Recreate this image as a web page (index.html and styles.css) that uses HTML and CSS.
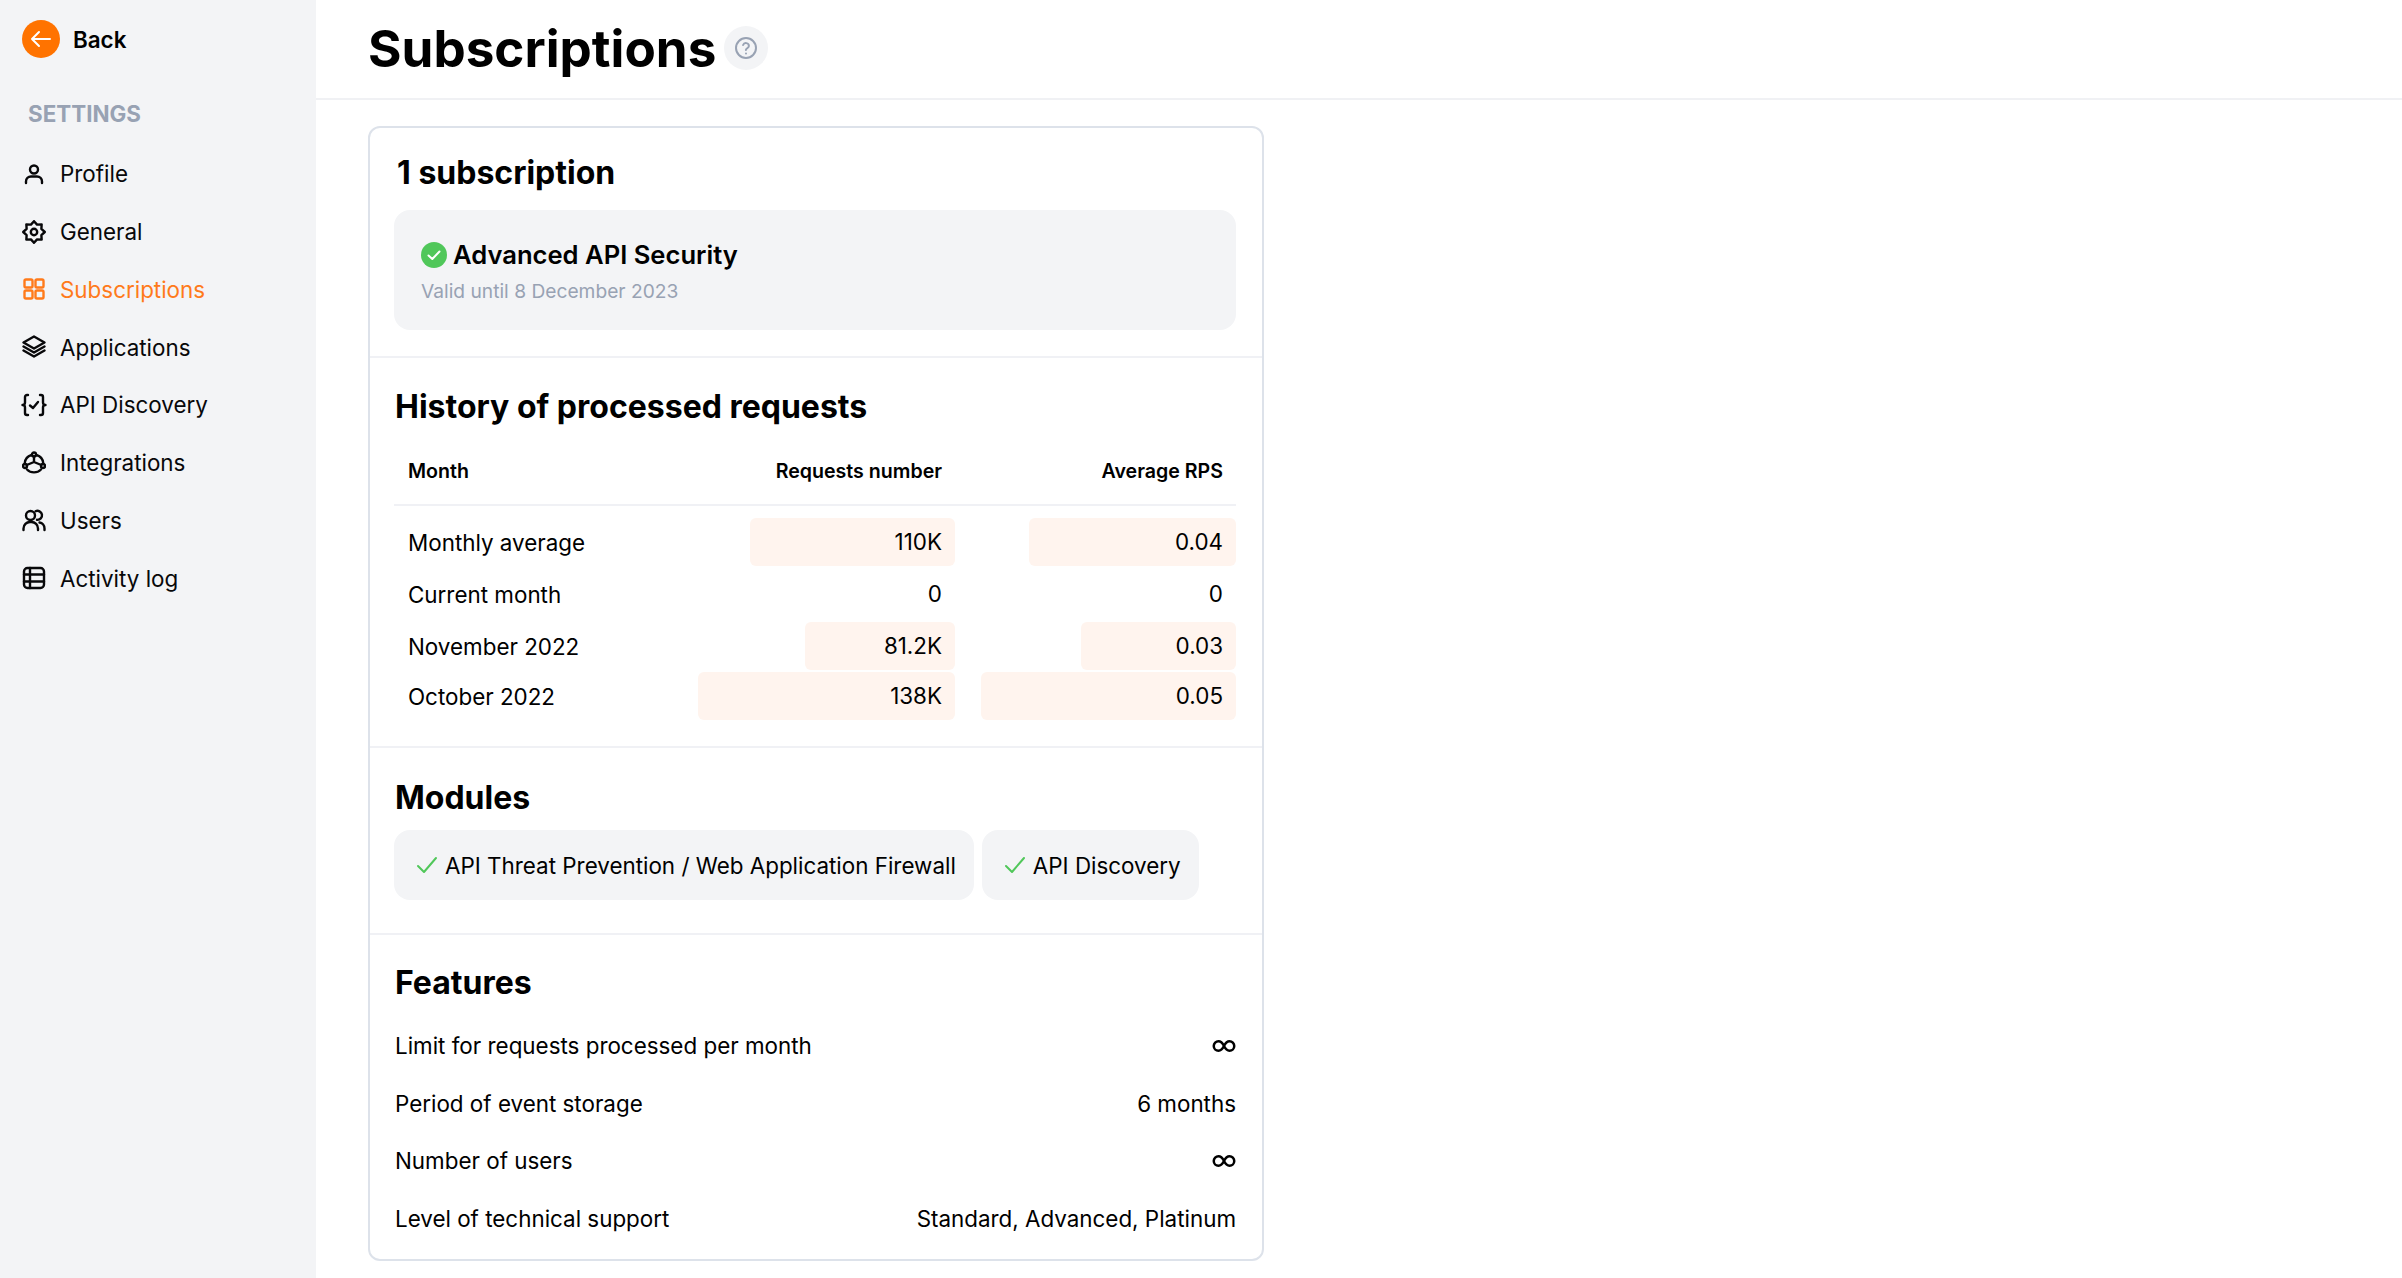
FILE: index.html
```html
<!DOCTYPE html>
<html lang="en">
<head>
<meta charset="utf-8">
<title>Subscriptions</title>
<link rel="stylesheet" href="styles.css">
</head>
<body>
<div class="app">
<aside class="sidebar">
  <a class="back"><span class="back-circle"><svg width="24" height="24" viewBox="0 0 24 24" fill="none" stroke="#fff" stroke-width="2" stroke-linecap="round" stroke-linejoin="round"><path d="M3 12h18M10 5l-7 7 7 7"/></svg></span><span>Back</span></a>
  <div class="nav-title">SETTINGS</div>
  <nav class="nav">
    <a class="nav-item"><svg class="ic" viewBox="0 0 24 24"><circle cx="12" cy="7.5" r="4"/><path d="M4 21v-1.5a5 5 0 0 1 5-5h6a5 5 0 0 1 5 5V21"/></svg>Profile</a>
    <a class="nav-item"><svg class="ic" viewBox="0 0 24 24"><circle cx="12" cy="12" r="3.200"/><path d="M12 1.200L15.060 4.610 19.640 4.360 19.390 8.940 22.800 12 19.390 15.060 19.640 19.640 15.060 19.390 12 22.800 8.940 19.390 4.360 19.640 4.610 15.060 1.200 12 4.610 8.940 4.360 4.360 8.940 4.610Z"/></svg>General</a>
    <a class="nav-item active"><svg class="ic" viewBox="0 0 24 24"><rect x="2.500" y="2.500" width="8" height="8" rx="1.500"/><rect x="13.500" y="2.500" width="8" height="8" rx="1.500"/><rect x="2.500" y="13.500" width="8" height="8" rx="1.500"/><rect x="13.500" y="13.500" width="8" height="8" rx="1.500"/></svg>Subscriptions</a>
    <a class="nav-item"><svg class="ic" viewBox="0 0 24 24"><path d="M12 1.500l10.500 6-10.500 6-10.500-6z"/><path d="M1.500 11.500l10.500 6 10.500-6"/><path d="M1.500 15.500l10.500 6 10.500-6"/></svg>Applications</a>
    <a class="nav-item"><svg class="ic wide" viewBox="0 0 26 24"><path d="M7 2H6a2 2 0 0 0-2 2v5.500c0 1.500-1 2.500-2.500 2.500C3 12 4 13 4 14.500V20a2 2 0 0 0 2 2h1"/><path d="M19 2h1a2 2 0 0 1 2 2v5.500c0 1.500 1 2.500 2.500 2.500-1.500 0-2.500 1-2.500 2.500V20a2 2 0 0 1-2 2h-1"/><path d="M9 12.500l3 2.500 5-6"/></svg>API Discovery</a>
    <a class="nav-item"><svg class="ic" viewBox="0 0 24 24"><circle cx="12" cy="3.500" r="2"/><circle cx="3" cy="15" r="2"/><circle cx="21" cy="15" r="2"/><path d="M9.500 4A9.500 9.500 0 0 0 2.700 12.500M14.500 4a9.500 9.500 0 0 1 6.800 8.500M5 18.500a10 10 0 0 0 14 0"/><path d="M12 5.500V11l-7.200 3M12 11l7.200 3"/></svg>Integrations</a>
    <a class="nav-item"><svg class="ic" viewBox="0 0 24 24"><circle cx="8.500" cy="7.500" r="4.500"/><path d="M13.500 3.300a4.500 4.500 0 1 1 1.500 8.500"/><path d="M1.500 22v-1.500a6.500 6.500 0 0 1 6.500-6.500h1.500a6.500 6.500 0 0 1 6.500 6.500V22"/><path d="M17.500 14.500a6 6 0 0 1 5 6V22"/></svg>Users</a>
    <a class="nav-item"><svg class="ic" viewBox="0 0 24 24"><rect x="2" y="2" width="20" height="20" rx="3.500"/><path d="M2 8.500h20M2 15.500h20M8 2v20"/></svg>Activity log</a>
  </nav>
</aside>
<main class="main">
  <header class="page-head">
    <h1>Subscriptions</h1>
    <span class="help"><svg width="24" height="24" viewBox="0 0 24 24" fill="none" stroke="#98a2b3" stroke-width="2" stroke-linecap="round" stroke-linejoin="round"><circle cx="12" cy="12" r="10"/><path d="M9.100 9a3 3 0 0 1 5.800 1c0 2-3 2.500-3 4"/><path d="M12 17.500h.01"/></svg></span>
  </header>
  <div class="content">
    <section class="card">
      <div class="block block-sub">
        <h2 class="sub-title">1 subscription</h2>
        <div class="plan">
          <div class="plan-name"><svg width="26" height="26" viewBox="0 0 26 26"><circle cx="13" cy="13" r="13" fill="#50c75a"/><path d="M7.500 13.500l3.800 3.500 7.200-7.500" fill="none" stroke="#fff" stroke-width="2" stroke-linecap="round" stroke-linejoin="round"/></svg>Advanced API Security</div>
          <div class="plan-date">Valid until 8 December 2023</div>
        </div>
      </div>
      <div class="block block-history">
        <h2>History of processed requests</h2>
        <div class="table">
          <div class="row head"><div class="c-month">Month</div><div class="c-val">Requests number</div><div class="c-val">Average RPS</div></div>
          <div class="row r1"><div class="c-month">Monthly average</div><div class="c-val"><span class="bar" style="width:205px">110K</span></div><div class="c-val"><span class="bar" style="width:207px">0.04</span></div></div>
          <div class="row r2"><div class="c-month">Current month</div><div class="c-val"><span class="bar none">0</span></div><div class="c-val"><span class="bar none">0</span></div></div>
          <div class="row r2"><div class="c-month">November 2022</div><div class="c-val"><span class="bar" style="width:150px">81.2K</span></div><div class="c-val"><span class="bar" style="width:155px">0.03</span></div></div>
          <div class="row r3"><div class="c-month">October 2022</div><div class="c-val"><span class="bar" style="width:257px">138K</span></div><div class="c-val"><span class="bar" style="width:257px">0.05</span></div></div>
        </div>
      </div>
      <div class="block block-modules">
        <h2>Modules</h2>
        <div class="chips">
          <span class="chip"><svg class="chk" viewBox="0 0 24 24"><path d="M3 13l6 6L21 5"/></svg>API Threat Prevention / Web Application Firewall</span>
          <span class="chip"><svg class="chk" viewBox="0 0 24 24"><path d="M3 13l6 6L21 5"/></svg>API Discovery</span>
        </div>
      </div>
      <div class="block block-features">
        <h2>Features</h2>
        <div class="feat"><span>Limit for requests processed per month</span><svg class="inf" viewBox="0 0 22 12"><path d="M11 6C9.500 3 8 1.250 5.500 1.250a4.750 4.750 0 0 0 0 9.500C8 10.750 9.500 9 11 6s3-4.750 5.500-4.750a4.750 4.750 0 0 1 0 9.500C14 10.750 12.500 9 11 6z"/></svg></div>
        <div class="feat"><span>Period of event storage</span><span>6 months</span></div>
        <div class="feat"><span>Number of users</span><svg class="inf" viewBox="0 0 22 12"><path d="M11 6C9.500 3 8 1.250 5.500 1.250a4.750 4.750 0 0 0 0 9.500C8 10.750 9.500 9 11 6s3-4.750 5.500-4.750a4.750 4.750 0 0 1 0 9.500C14 10.750 12.500 9 11 6z"/></svg></div>
        <div class="feat"><span>Level of technical support</span><span>Standard, Advanced, Platinum</span></div>
      </div>
    </section>
  </div>
</main>
</div>
</body>
</html>
```
FILE: styles.css
```css
* { box-sizing: border-box; }
html, body { margin: 0; height: 100%; }
body { font-family: Inter, "Liberation Sans", sans-serif; color: #000; background: #fff; overflow: hidden; }
.app { display: flex; height: 1278px; }
.sidebar { width: 316px; flex: none; background: #f3f4f6; padding: 20px 22px 0; }
.back { display: flex; align-items: center; gap: 13px; font-size: 22.4px; font-weight: 600; height: 38px; }
.back-circle { width: 38px; height: 38px; border-radius: 50%; background: #ff7300; display: flex; align-items: center; justify-content: center; }
.nav-title { margin: 43px 0 0 6px; font-size: 22.4px; line-height: 26px; font-weight: 700; color: #98a2b3; }
.nav { display: flex; flex-direction: column; margin-top: 18px; }
.nav-item { display: flex; align-items: center; gap: 14px; height: 57.75px; font-size: 22.4px; color: #08080a; }
.nav-item.active { color: #ff7a1a; }
.ic { width: 24px; height: 24px; flex: none; fill: none; stroke: currentColor; stroke-width: 2.4; stroke-linecap: round; stroke-linejoin: round; }
.ic.wide { width: 26px; margin: 0 -1px; }
.main { flex: 1; min-width: 0; }
.page-head { height: 100px; border-bottom: 2px solid #f0f1f4; padding: 0 0 3px 52px; display: flex; align-items: center; gap: 8px; }
h1 { margin: 0; font-size: 51.2px; font-weight: 700; line-height: 60px; }
.help { width: 44px; height: 44px; border-radius: 50%; background: #f3f4f6; display: flex; align-items: center; justify-content: center; }
.content { padding: 26px 0 0 52px; }
.card { width: 896px; height: 1135px; border: 2px solid #dde2ea; border-radius: 12px; }
.block { padding: 0 26px 0 24px; border-bottom: 2px solid #f0f1f5; }
.block:last-child { border-bottom: 0; }
h2 { margin: 0 0 0 1px; font-size: 32px; line-height: 40px; font-weight: 700; }
.block-sub { height: 230px; padding-top: 25px; }
.sub-title { margin-left: 3px; }
.plan { margin-top: 17px; height: 120px; background: #f3f4f6; border-radius: 16px; padding: 29px 27px 0; }
.plan-name { display: flex; align-items: center; gap: 6px; font-size: 25.6px; line-height: 32px; font-weight: 600; }
.plan-date { margin-top: 7px; font-size: 19.2px; line-height: 26px; color: #98a2b3; }
.block-history { height: 390px; padding-top: 29px; }
.table { margin-top: 12px; }
.row { display: grid; grid-template-columns: 1fr 300px 255px; column-gap: 26px; align-items: center; font-size: 22.4px; }
.row > .c-month { padding-left: 14px; }
.c-val { display: flex; justify-content: flex-end; text-align: right; }
.row.head { height: 67px; padding-bottom: 2px; font-size: 19.6px; font-weight: 600; border-bottom: 2px solid #f0f1f5; margin-bottom: 12px; }
.row.head .c-val { padding-right: 13px; }
.row.r1, .row.r2 { margin-bottom: 4px; }
.row.r1, .row.r2, .row.r3 { height: 48px; }
.row.r3 { margin-top: -2px; }
.bar { height: 48px; line-height: 48px; padding-right: 13px; background: #fff4ee; border-radius: 6px; display: block; }
.bar.none { background: none; }
.block-modules { height: 187px; padding-top: 30px; }
.chips { display: flex; gap: 8px; margin-top: 12px; }
.chip { display: flex; align-items: center; gap: 6px; height: 70px; padding: 0 18px 0 21px; background: #f3f4f6; border-radius: 16px; font-size: 22.4px; white-space: nowrap; }
.chk { width: 24px; height: 24px; fill: none; stroke: #50c75a; stroke-width: 2; stroke-linecap: round; stroke-linejoin: round; }
.block-features { padding-top: 28px; }
.feat { display: flex; justify-content: space-between; align-items: center; height: 57.5px; font-size: 22.4px; padding-left: 1px; }
.block-features h2 + .feat { margin-top: 14px; }
.inf { width: 22px; height: 12px; margin-right: 1px; overflow: visible; fill: none; stroke: #000; stroke-width: 2.5; }
```
